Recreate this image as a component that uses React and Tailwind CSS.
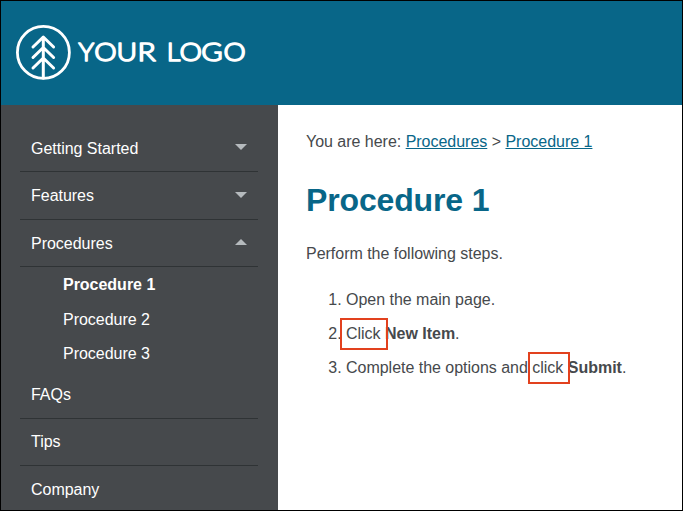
const LETTERS = [
  ["Y", 63.4, 15.6],
  ["O", 79.2, 22.4],
  ["U", 101.5, 20.6],
  ["R", 122.4, 18.2],
  ["L", 151.7, 13.5],
  ["O", 164.4, 22.4],
  ["G", 186.3, 21.4],
  ["O", 208.6, 22.2],
];

function Logo() {
  return (
    <svg width="232" height="58" viewBox="0 0 232 58" fill="none" stroke="#fff" strokeLinecap="round" strokeLinejoin="round" role="img">
      <circle cx="28.4" cy="28.4" r="26" strokeWidth="2.8" />
      <path d="M28.3 54V13M18 23 28.3 13 38.6 23M18 33.5 28.3 23.5 38.6 33.5M18 44 28.3 34 38.6 44" strokeWidth="3" />
      <text y="36.9" fill="#fff" strokeWidth="1.6" className="font-['Lato',sans-serif] text-[25px] font-light">
        {LETTERS.map(([char, x, width], i) => (
          <tspan key={i} x={x} textLength={width} lengthAdjust="spacingAndGlyphs">
            {char}
          </tspan>
        ))}
      </text>
    </svg>
  );
}

function Arrow({ up }) {
  return (
    <svg width="12" height="6" viewBox="0 0 12 6" fill="#b5babd" className="shrink-0">
      <path d={up ? "M0 6 6 0l6 6z" : "M0 0h12L6 6z"} />
    </svg>
  );
}

function NavItem({ label, arrow, className, arrowClassName = "h-5" }) {
  return (
    <div className={`flex justify-between border-b border-[#2f3335] px-[11px] ${className}`}>
      <span className="leading-6 tracking-[-0.02px]">{label}</span>
      {arrow && (
        <span className={`flex items-center ${arrowClassName}`}>
          <Arrow up={arrow === "up"} />
        </span>
      )}
    </div>
  );
}

function Marked({ children, className }) {
  return (
    <span className="relative">
      {children}
      <span className={`absolute border-2 border-[#e2411e] ${className}`} />
    </span>
  );
}

export default function App() {
  return (
    <div className="flex h-[511px] w-[683px] flex-col overflow-hidden border border-black bg-white font-['Liberation_Sans',Arial,sans-serif] text-base text-[#46494c]">
      <header className="h-[104px] shrink-0 bg-[#086688] pl-[14px] pt-[23px]">
        <Logo />
      </header>
      <div className="flex min-h-0 flex-1">
        <nav className="w-[277px] shrink-0 overflow-hidden bg-[#46494c] pl-[19px] pr-5 pt-[19px] text-white">
          <NavItem label="Getting Started" arrow="down" className="h-12 pt-[13px]" />
          <NavItem label="Features" arrow="down" className="h-12 pt-3" arrowClassName="h-[22px]" />
          <NavItem label="Procedures" arrow="up" className="h-[47px] pt-3" />
          <ul className="h-[104px] pl-[43px] pt-[6px] tracking-[-0.02px]">
            <li className="h-[35px] font-bold leading-6">Procedure 1</li>
            <li className="h-[34px] leading-6">Procedure 2</li>
            <li className="leading-6">Procedure 3</li>
          </ul>
          <NavItem label="FAQs" className="h-12 pt-3" />
          <NavItem label="Tips" className="h-[47px] pt-[11px]" />
          <NavItem label="Company" className="h-12 pt-3" />
        </nav>
        <main className="flex-1 pl-7 pt-[25px] tracking-[-0.02px]">
          <p className="leading-6">
            You are here: <a className="text-[#086688] underline">Procedures</a> &gt;{" "}
            <a className="text-[#086688] underline">Procedure 1</a>
          </p>
          <h1 className="mt-[26px] text-[32px] font-bold leading-10 tracking-[-0.15px] text-[#086688]">Procedure 1</h1>
          <p className="mt-[22px] leading-6">Perform the following steps.</p>
          <ol className="mt-[22px] flex list-decimal flex-col gap-[10px] pl-10 leading-6">
            <li>Open the main page.</li>
            <li>
              <Marked className="-left-[6px] -top-[7px] h-8 w-12">Click</Marked> <b>New Item</b>.
            </li>
            <li>
              Complete the options and{" "}
              <Marked className="-left-[4px] -top-[7px] h-8 w-[42px]">click</Marked> <b>Submit</b>.
            </li>
          </ol>
        </main>
      </div>
    </div>
  );
}
